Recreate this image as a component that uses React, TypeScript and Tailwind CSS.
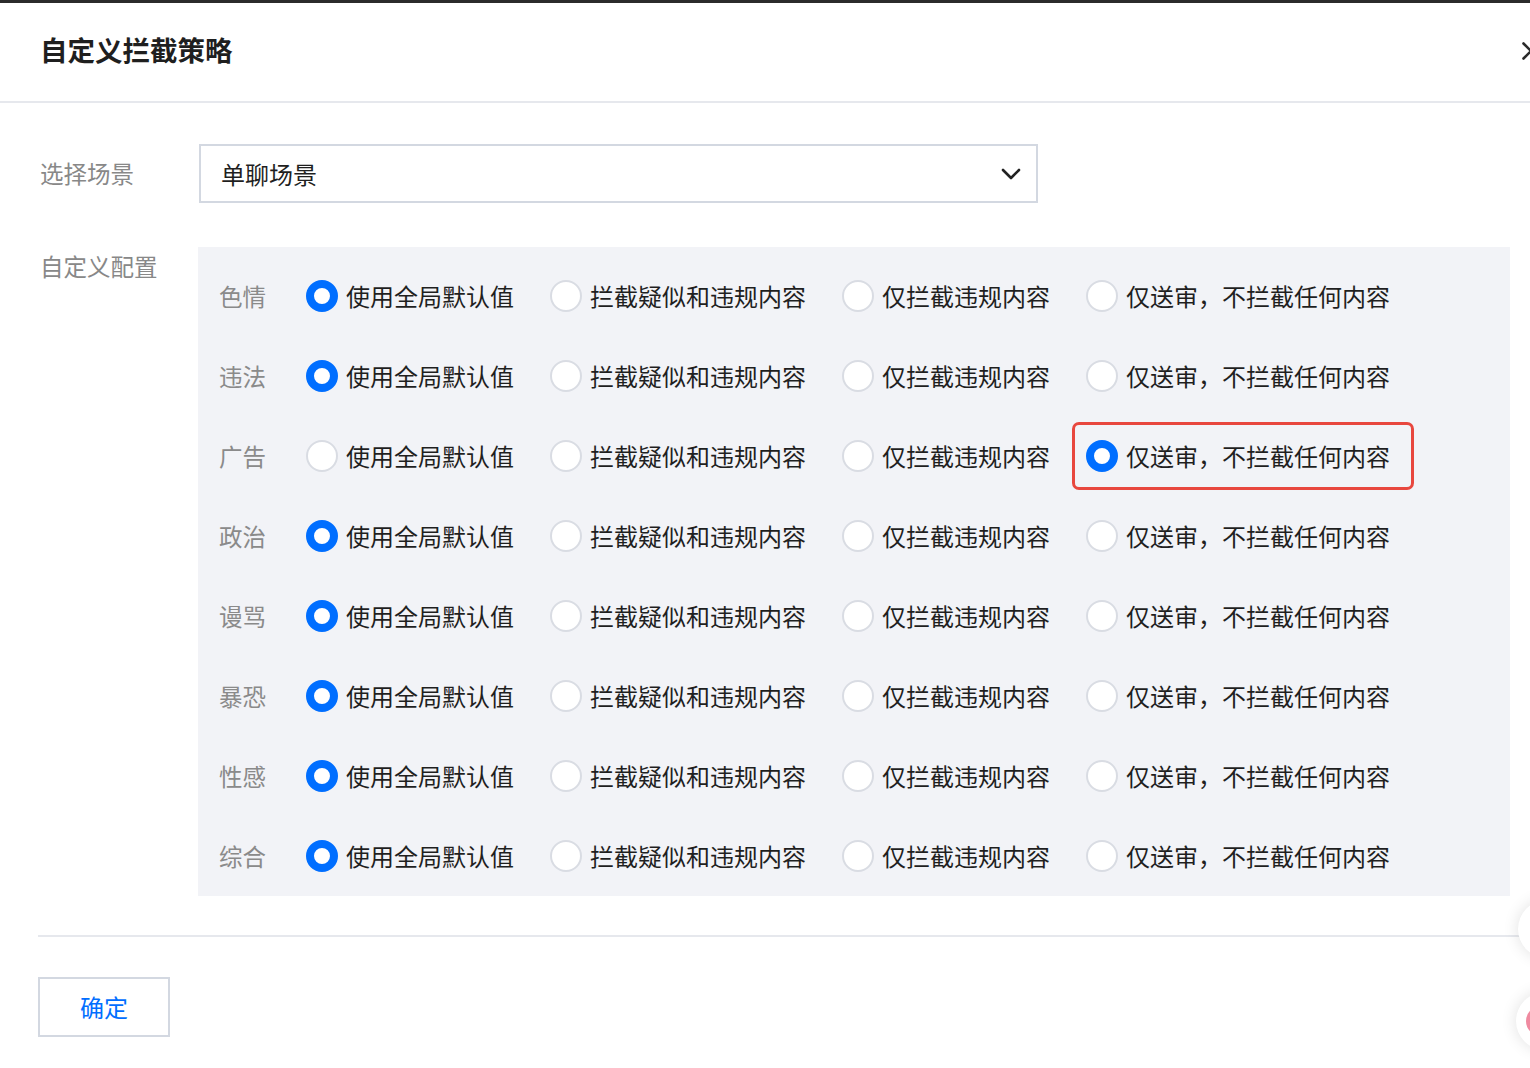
import React, { useState } from "react";

const categories = ["色情", "违法", "广告", "政治", "谩骂", "暴恐", "性感", "综合"];
const options = ["使用全局默认值", "拦截疑似和违规内容", "仅拦截违规内容", "仅送审，不拦截任何内容"];

function Radio({ checked }: { checked: boolean }) {
  return checked ? (
    <span className="w-[32px] h-[32px] rounded-full border-[8px] border-[#006eff] bg-white shrink-0" />
  ) : (
    <span className="w-[32px] h-[32px] rounded-full border-2 border-[#d9dce3] bg-white shrink-0" />
  );
}

export default function App() {
  const [values, setValues] = useState<number[]>([0, 0, 3, 0, 0, 0, 0, 0]);

  const pick = (row: number, opt: number) => {
    setValues((v) => v.map((x, i) => (i === row ? opt : x)));
  };

  return (
    <div
      className="relative w-[1530px] h-[1068px] overflow-hidden bg-white text-[#1f1f1f]"
      style={{ fontFamily: '"Noto Sans CJK SC", "Noto Sans", sans-serif' }}
    >
      <div className="h-[3px] bg-[#2b2b2b]" />

      {/* header */}
      <div className="h-[100px] flex items-center justify-between pl-[40px] border-b-2 border-[#e6e8ed]">
        <h1 className="text-[27.5px] font-bold leading-none pb-[4px]">自定义拦截策略</h1>
        <svg width="18" height="18" viewBox="0 0 18 18" className="mr-[-10px] mb-[2px]" fill="none" stroke="#2a2a2a" strokeWidth="2.6" strokeLinecap="round">
          <path d="M1.5 1.5 L16.5 16.5 M16.5 1.5 L1.5 16.5" />
        </svg>
      </div>

      <div className="pl-[40px] pt-[41px]">
        {/* scene select */}
        <div className="flex items-center">
          <div className="w-[159px] text-[23.5px] text-[#888888]">选择场景</div>
          <div className="w-[839px] h-[59px] border-2 border-[#d3d8e1] flex items-center justify-between pl-[20px] pr-[15px] text-[24px]">
            <span>单聊场景</span>
            <svg width="20" height="12" viewBox="0 0 20 12" fill="none" stroke="#222" strokeWidth="2.6" strokeLinecap="round" strokeLinejoin="round">
              <path d="M2 2 L10 10 L18 2" />
            </svg>
          </div>
        </div>

        {/* custom config */}
        <div className="flex items-start mt-[44px]">
          <div className="w-[158px] text-[23.5px] text-[#888888] pt-[2px]">自定义配置</div>
          <div className="w-[1312px] bg-[#f2f3f7] pl-[21px] pt-[9px]">
            {categories.map((cat, row) => (
              <div key={cat} className="h-[80px] flex items-center">
                <div className="w-[87px] text-[23.5px] text-[#8a8a8a] pt-[2px]">{cat}</div>
                <div className="flex items-center gap-[36px]">
                  {options.map((opt, oi) => (
                    <button
                      key={opt}
                      type="button"
                      onClick={() => pick(row, oi)}
                      className="relative flex items-center gap-[8px] text-[24px] text-[#1f1f1f]"
                    >
                      <Radio checked={values[row] === oi} />
                      <span>{opt}</span>
                      {row === 2 && oi === 3 && (
                        <span className="absolute -left-[14px] -right-[24px] -top-[16px] -bottom-[16px] border-[3px] border-[#e8473e] rounded-[7px] pointer-events-none" />
                      )}
                    </button>
                  ))}
                </div>
              </div>
            ))}
          </div>
        </div>
      </div>

      <div className="ml-[38px] mt-[39px] border-t-2 border-[#e6e8ed]" />

      <div className="pl-[38px] pt-[40px]">
        <button
          type="button"
          className="w-[132px] h-[60px] border-2 border-[#d3d8e1] text-[24px] text-[#006eff] bg-white"
        >
          确定
        </button>
      </div>

      {/* floating side buttons */}
      <div className="absolute left-[1518px] top-[900px] w-[58px] h-[58px] rounded-full bg-white shadow-[0_0_16px_rgba(0,0,0,0.12)]" />
      <div className="absolute left-[1516px] top-[992px] w-[58px] h-[58px] rounded-full bg-white shadow-[0_0_16px_rgba(0,0,0,0.12)] flex items-center pl-[10px]">
        <span className="w-[30px] h-[30px] rounded-full bg-[#f08aa0]" />
      </div>
    </div>
  );
}
